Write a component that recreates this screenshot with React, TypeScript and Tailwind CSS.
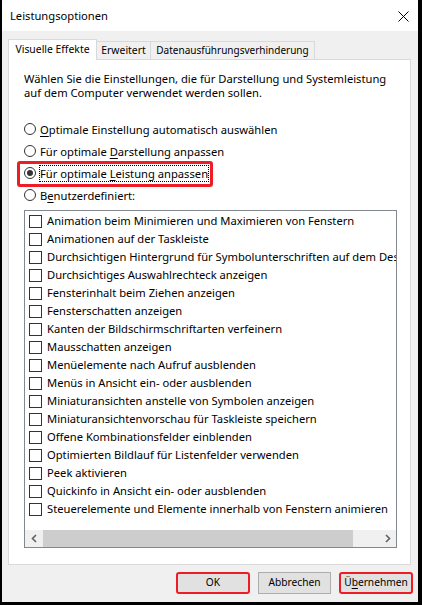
import React from "react";

const items = [
  "Animation beim Minimieren und Maximieren von Fenstern",
  "Animationen auf der Taskleiste",
  "Durchsichtigen Hintergrund für Symbolunterschriften auf dem Desktop",
  "Durchsichtiges Auswahlrechteck anzeigen",
  "Fensterinhalt beim Ziehen anzeigen",
  "Fensterschatten anzeigen",
  "Kanten der Bildschirmschriftarten verfeinern",
  "Mausschatten anzeigen",
  "Menüelemente nach Aufruf ausblenden",
  "Menüs in Ansicht ein- oder ausblenden",
  "Miniaturansichten anstelle von Symbolen anzeigen",
  "Miniaturansichtenvorschau für Taskleiste speichern",
  "Offene Kombinationsfelder einblenden",
  "Optimierten Bildlauf für Listenfelder verwenden",
  "Peek aktivieren",
  "Quickinfo in Ansicht ein- oder ausblenden",
  "Steuerelemente und Elemente innerhalb von Fenstern animieren",
];

function Radio({
  children,
  checked,
  focused,
  highlight,
}: {
  children: React.ReactNode;
  checked?: boolean;
  focused?: boolean;
  highlight?: boolean;
}) {
  return (
    <div className="relative flex h-[22px] items-center">
      <span className="flex h-[12px] w-[12px] items-center justify-center rounded-full border border-[#333333] bg-white">
        {checked && <span className="h-[6px] w-[6px] rounded-full bg-[#333333]" />}
      </span>
      {focused ? (
        <span className="ml-[3px] border border-dotted border-black px-0 leading-[15px]">{children}</span>
      ) : (
        <span className="ml-[4px] leading-[15px]">{children}</span>
      )}
      {highlight && (
        <div className="pointer-events-none absolute left-[-7px] top-[-1px] h-[26px] w-[196px] rounded-[3px] border-[3px] border-[#ee1c25]" />
      )}
    </div>
  );
}

function Chevron({ dir }: { dir: "left" | "right" }) {
  return (
    <svg width="7" height="9" viewBox="0 0 7 9">
      <polyline
        points={dir === "left" ? "5,1 1.5,4.5 5,8" : "2,1 5.5,4.5 2,8"}
        fill="none"
        stroke="#606060"
        strokeWidth="1.6"
      />
    </svg>
  );
}

export default function App() {
  return (
    <div className="flex h-[605px] w-[422px] flex-col border-b-[3px] border-l-2 border-r-4 border-black bg-[#f0f0f0] font-['Noto_Sans',sans-serif] text-[11.2px] text-black">
      {/* Title bar */}
      <div className="flex h-[31px] shrink-0 items-center justify-between bg-white pl-[8px] pr-[9px] pt-[2px]">
        <span>Leistungsoptionen</span>
        <svg width="11" height="11" viewBox="0 0 11 11">
          <path d="M0.5 0.5 L10.5 10.5 M10.5 0.5 L0.5 10.5" stroke="#000" strokeWidth="1" />
        </svg>
      </div>

      {/* Body */}
      <div className="flex flex-1 flex-col pt-[8px]">
        {/* Tabs */}
        <div className="ml-[6px] flex h-[20px] items-end text-[10.4px]">
          <div className="relative z-10 -mb-px flex h-[21px] w-[89px] items-center justify-center border border-b-0 border-[#d9d9d9] bg-white">
            Visuelle Effekte
          </div>
          <div className="flex h-[18px] w-[54px] items-center justify-center border border-b-0 border-l-0 border-[#d9d9d9]">
            Erweitert
          </div>
          <div className="flex h-[18px] w-[164px] items-center justify-center border border-b-0 border-l-0 border-[#d9d9d9] text-[10px]">
            Datenausführungsverhinderung
          </div>
        </div>

        {/* Panel */}
        <div className="ml-[6px] mr-[7px] flex h-[506px] flex-col border border-[#d9d9d9] bg-white pl-[15px] pt-[12px]">
          <p className="leading-[14px]">
            Wählen Sie die Einstellungen, die für Darstellung und Systemleistung
            <br />
            auf dem Computer verwendet werden sollen.
          </p>

          <div className="mt-[18px] flex flex-col">
            <Radio>
              <span className="underline underline-offset-2">O</span>ptimale Einstellung automatisch auswählen
            </Radio>
            <Radio>
              Für optimale <span className="underline underline-offset-2">D</span>arstellung anpassen
            </Radio>
            <Radio checked focused highlight>
              Für optimale <span className="underline underline-offset-2">L</span>eistung anpassen
            </Radio>
            <Radio>
              B<span className="underline underline-offset-2">e</span>nutzerdefiniert:
            </Radio>
          </div>

          {/* List box */}
          <div className="mt-[4px] flex h-[338px] w-[373px] flex-col border border-[#828790] bg-white">
            <div className="flex flex-1 flex-col overflow-hidden pt-[1px]">
              {items.map((t) => (
                <div key={t} className="flex h-[18px] shrink-0 items-center pl-[4px]">
                  <span className="h-[13px] w-[13px] shrink-0 border border-[#333333] bg-white" />
                  <span className="ml-[5px] whitespace-nowrap">{t}</span>
                </div>
              ))}
            </div>
            <div className="flex h-[17px] shrink-0 bg-[#f0f0f0]">
              <div className="flex w-[18px] items-center justify-center">
                <Chevron dir="left" />
              </div>
              <div className="h-full w-[310px] bg-[#cdcdcd]" />
              <div className="flex-1" />
              <div className="flex w-[17px] items-center justify-center">
                <Chevron dir="right" />
              </div>
            </div>
          </div>
        </div>

        {/* Buttons */}
        <div className="mt-[7px] flex justify-end gap-[8px] pr-[5px] text-[10.2px]">
          <button className="flex h-[22px] w-[74px] items-center justify-center rounded-[3px] border-2 border-[#ee1c25] bg-[#e1e1e1]">
            OK
          </button>
          <button className="flex h-[22px] w-[73px] items-center justify-center border border-[#adadad] bg-[#e1e1e1]">
            Abbrechen
          </button>
          <button className="flex h-[22px] w-[74px] items-center justify-center rounded-[3px] border-2 border-[#ee1c25] bg-[#e1e1e1]">
            Ü<span className="underline underline-offset-2">b</span>ernehmen
          </button>
        </div>
      </div>
    </div>
  );
}
